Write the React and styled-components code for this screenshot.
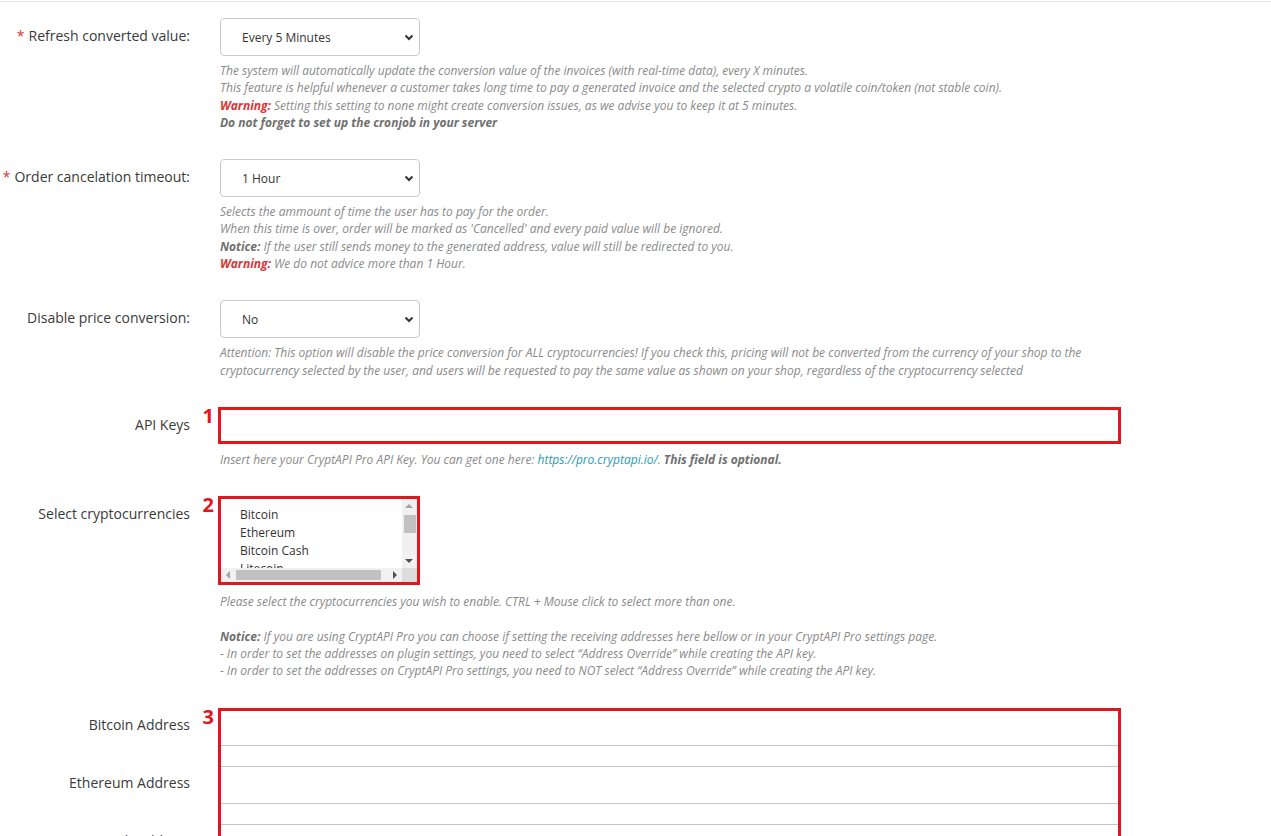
import React from "react";
import styled, { createGlobalStyle } from "styled-components";

const GlobalStyle = createGlobalStyle`
  body {
    margin: 0;
    background: #fff;
    font-family: "Open Sans", "Liberation Sans", sans-serif;
  }
`;

const Chevron = () => (
  <ChevronIcon width="10" height="7" viewBox="0 0 10 7">
    <path d="M1.5 1.5 L5 5 L8.5 1.5" fill="none" stroke="#333" strokeWidth="2" />
  </ChevronIcon>
);

const Arrow = ({ dir, dark }) => {
  const points = {
    up: "0,5 4,1 8,5",
    down: "0,1 4,5 8,1",
    left: "5,0 1,4 5,8",
    right: "1,0 5,4 1,8",
  }[dir];
  const vertical = dir === "up" || dir === "down";
  return (
    <svg width={vertical ? 8 : 6} height={vertical ? 6 : 8} viewBox={vertical ? "0 0 8 6" : "0 0 6 8"}>
      <polygon points={points} fill={dark ? "#505050" : "#a3a3a3"} />
    </svg>
  );
};

const App = () => {
  return (
    <Page>
      <GlobalStyle />
      <Row>
        <Label>
          <Star>*</Star>Refresh converted value:
        </Label>
        <Field>
          <SelectWrap>
            <Select defaultValue="5">
              <option value="5">Every 5 Minutes</option>
            </Select>
            <Chevron />
          </SelectWrap>
          <Help>
            The system will automatically update the conversion value of the invoices (with real-time data), every X minutes.
            <br />
            This feature is helpful whenever a customer takes long time to pay a generated invoice and the selected crypto a volatile coin/token (not stable coin).
            <br />
            <Warn>Warning:</Warn> Setting this setting to none might create conversion issues, as we advise you to keep it at 5 minutes.
            <br />
            <Note>Do not forget to set up the cronjob in your server</Note>
          </Help>
        </Field>
      </Row>

      <Row>
        <Label>
          <Star>*</Star>Order cancelation timeout:
        </Label>
        <Field>
          <SelectWrap>
            <Select defaultValue="1">
              <option value="1">1 Hour</option>
            </Select>
            <Chevron />
          </SelectWrap>
          <Help>
            Selects the ammount of time the user has to pay for the order.
            <br />
            When this time is over, order will be marked as 'Cancelled' and every paid value will be ignored.
            <br />
            <Note>Notice:</Note> If the user still sends money to the generated address, value will still be redirected to you.
            <br />
            <Warn>Warning:</Warn> We do not advice more than 1 Hour.
          </Help>
        </Field>
      </Row>

      <Row>
        <Label>Disable price conversion:</Label>
        <Field>
          <SelectWrap>
            <Select defaultValue="no">
              <option value="no">No</option>
            </Select>
            <Chevron />
          </SelectWrap>
          <Help>
            Attention: This option will disable the price conversion for ALL cryptocurrencies! If you check this, pricing will not be converted from the currency of your shop to the cryptocurrency selected by the user, and users will be requested to pay the same value as shown on your shop, regardless of the cryptocurrency selected
          </Help>
        </Field>
      </Row>

      <Row>
        <Label>API Keys</Label>
        <Field>
          <Highlight $width={903}>
            <Badge>1</Badge>
            <PlainInput type="text" />
          </Highlight>
          <Help $gap={7}>
            Insert here your CryptAPI Pro API Key. You can get one here: <Link href="#">https://pro.cryptapi.io/</Link>. <Note>This field is optional.</Note>
          </Help>
        </Field>
      </Row>

      <Row>
        <Label>Select cryptocurrencies</Label>
        <Field>
          <Highlight $width={202}>
            <Badge>2</Badge>
            <ListBox>
              <Options>
                <Option>Bitcoin</Option>
                <Option>Ethereum</Option>
                <Option>Bitcoin Cash</Option>
                <Option>Litecoin</Option>
              </Options>
              <VScroll>
                <ArrowCell>
                  <Arrow dir="up" />
                </ArrowCell>
                <VThumb />
                <Spacer />
                <ArrowCell>
                  <Arrow dir="down" dark />
                </ArrowCell>
              </VScroll>
              <HScroll>
                <ArrowCell>
                  <Arrow dir="left" />
                </ArrowCell>
                <HThumb />
                <Spacer />
                <ArrowCell>
                  <Arrow dir="right" dark />
                </ArrowCell>
              </HScroll>
              <Corner />
            </ListBox>
          </Highlight>
          <Help $gap={8}>
            Please select the cryptocurrencies you wish to enable. CTRL + Mouse click to select more than one.
            <br />
            <br />
            <Note>Notice:</Note> If you are using CryptAPI Pro you can choose if setting the receiving addresses here bellow or in your CryptAPI Pro settings page.
            <br />
            - In order to set the addresses on plugin settings, you need to select “Address Override” while creating the API key.
            <br />
            - In order to set the addresses on CryptAPI Pro settings, you need to NOT select “Address Override” while creating the API key.
          </Help>
        </Field>
      </Row>

      <Row>
        <LabelStack>
          <StackLabel>Bitcoin Address</StackLabel>
          <StackLabel>Ethereum Address</StackLabel>
          <StackLabel>Bitcoin Cash Address</StackLabel>
          <StackLabel>Litecoin Address</StackLabel>
        </LabelStack>
        <Field>
          <Highlight $width={903}>
            <Badge>3</Badge>
            <InputStack>
              <LineInput type="text" />
              <LineInput type="text" />
              <LineInput type="text" />
              <LineInput type="text" />
            </InputStack>
          </Highlight>
        </Field>
      </Row>
    </Page>
  );
};

const Page = styled.div`
  margin-top: 1px;
  border-top: 1px solid #e3e3e3;
  padding-top: 16px;
  color: #333;
`;

const Row = styled.div`
  display: grid;
  grid-template-columns: 190px 900px;
  column-gap: 30px;
  margin-bottom: 28px;
`;

const Label = styled.label`
  text-align: right;
  font-size: 14px;
  line-height: 20px;
  padding-top: 8px;
  color: #3a3a3a;
  white-space: nowrap;
`;

const Star = styled.span`
  color: #d63638;
  margin-right: 4px;
`;

const Field = styled.div`
  min-width: 0;
`;

const SelectWrap = styled.div`
  position: relative;
  width: 200px;
  height: 38px;
`;

const Select = styled.select`
  appearance: none;
  width: 100%;
  height: 100%;
  box-sizing: border-box;
  border: 1px solid #cacaca;
  border-radius: 4px;
  background: #fff;
  padding: 0 24px 0 21px;
  font-family: "Open Sans", "Liberation Sans", sans-serif;
  font-size: 12px;
  color: #333;
  outline: none;
`;

const ChevronIcon = styled.svg`
  position: absolute;
  right: 6px;
  top: 16px;
  pointer-events: none;
`;

const Help = styled.div`
  margin-top: ${(p) => p.$gap ?? 6}px;
  font-size: 12px;
  line-height: 17.3px;
  font-style: italic;
  color: #8a8a8a;
`;

const Warn = styled.b`
  color: #d63638;
  font-weight: 700;
`;

const Note = styled.b`
  color: #707070;
  font-weight: 700;
`;

const Link = styled.a`
  color: #2e9ab5;
  text-decoration: none;
`;

const Highlight = styled.div`
  position: relative;
  box-sizing: border-box;
  width: ${(p) => p.$width}px;
  margin-left: -2px;
  border: 3px solid #e3161d;
  background: #fff;
`;

const Badge = styled.span`
  position: absolute;
  right: calc(100% + 7px);
  top: -4px;
  font-size: 20px;
  line-height: 20px;
  font-weight: 700;
  color: #e3161d;
`;

const PlainInput = styled.input`
  display: block;
  width: 100%;
  height: 31px;
  box-sizing: border-box;
  border: none;
  outline: none;
  background: #fff;
`;

const ListBox = styled.div`
  display: grid;
  grid-template-columns: 1fr 15px;
  grid-template-rows: 69px 14px;
  height: 83px;
  background: #fff;
`;

const Options = styled.div`
  overflow: hidden;
  padding: 7px 0 0 19px;
  font-size: 12px;
  line-height: 18px;
  color: #333;
`;

const Option = styled.div`
  white-space: nowrap;
`;

const VScroll = styled.div`
  display: flex;
  flex-direction: column;
  background: #f1f1f1;
`;

const HScroll = styled.div`
  display: flex;
  align-items: center;
  background: #f1f1f1;
`;

const ArrowCell = styled.div`
  display: flex;
  align-items: center;
  justify-content: center;
  flex: 0 0 14px;
  height: 14px;
  width: 14px;
`;

const VThumb = styled.div`
  margin: 2px 1px 0 2px;
  height: 18px;
  background: #c1c1c1;
`;

const HThumb = styled.div`
  width: 145px;
  height: 10px;
  margin-left: 1px;
  background: #c1c1c1;
`;

const Spacer = styled.div`
  flex: 1;
`;

const Corner = styled.div`
  background: #dcdcdc;
`;

const LabelStack = styled.div`
  display: flex;
  flex-direction: column;
  gap: 20px;
  align-items: flex-end;
`;

const StackLabel = styled.label`
  height: 38px;
  line-height: 34px;
  font-size: 14px;
  color: #3a3a3a;
  white-space: nowrap;
`;

const InputStack = styled.div`
  display: flex;
  flex-direction: column;
  gap: 20px;
`;

const LineInput = styled.input`
  display: block;
  width: 100%;
  height: 38px;
  box-sizing: border-box;
  border: none;
  border-top: 1px solid #c6c6c6;
  border-bottom: 1px solid #c6c6c6;
  outline: none;
  background: #fff;

  &:first-child {
    height: 35px;
    border-top: none;
  }
`;

export default App;
